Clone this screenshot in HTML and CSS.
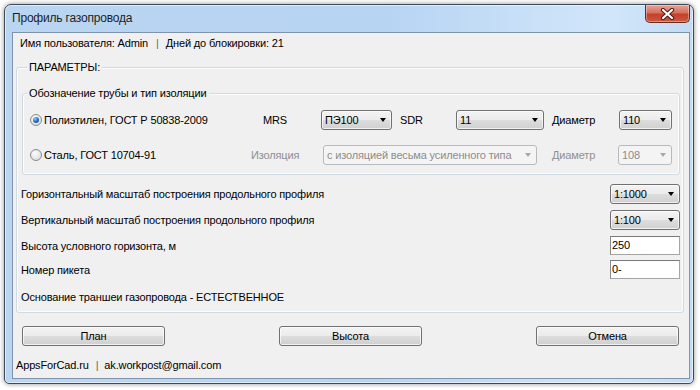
FILE: index.html
```html
<!DOCTYPE html>
<html>
<head>
	<meta charset="UTF-8" />
	<title>Профиль газопровода</title>
	<link rel="stylesheet" href="styles.css">
</head>
<body>
	<div class="window">
		<!--title bar-->
		<div class="titlebar">
			<span class="title">Профиль газопровода</span>
			<div class="close">
				<svg width="15" height="12" viewBox="0 0 15 12">
					<path d="M3 2 L12 10 M12 2 L3 10" stroke="#4a1a12" stroke-width="4.2" stroke-linecap="round"/>
					<path d="M3 2 L12 10 M12 2 L3 10" stroke="#fff" stroke-width="2.2" stroke-linecap="round"/>
				</svg>
			</div>
		</div>

		<div class="client">
			<div class="userline">Имя пользователя: Admin<span class="sep">|</span>Дней до блокировки: 21</div>

			<div class="group params">
				<div class="group-title">ПАРАМЕТРЫ:</div>

				<div class="group pipe">
					<div class="group-title">Обозначение трубы и тип изоляции</div>
					<div class="pipe-row">
						<label class="opt w-poly"><span class="radio checked"></span>Полиэтилен, ГОСТ Р 50838-2009</label>
						<span class="lbl w-mrs">MRS</span>
						<div class="combo w-71"><span>ПЭ100</span><i class="arrow"></i></div>
						<span class="lbl w-sdr">SDR</span>
						<div class="combo w-88"><span>11</span><i class="arrow"></i></div>
						<span class="lbl w-diam">Диаметр</span>
						<div class="combo w-53"><span>110</span><i class="arrow"></i></div>
					</div>
					<div class="pipe-row second">
						<label class="opt w-steel"><span class="radio"></span>Сталь, ГОСТ 10704-91</label>
						<span class="lbl off w-iso">Изоляция</span>
						<div class="combo off w-214"><span>с изоляцией весьма усиленного типа</span><i class="arrow"></i></div>
						<span class="lbl off w-diam2">Диаметр</span>
						<div class="combo off w-54"><span>108</span><i class="arrow"></i></div>
					</div>
				</div>

				<div class="field">
					<span>Горизонтальный масштаб построения продольного профиля</span>
					<div class="combo w-70"><span>1:1000</span><i class="arrow"></i></div>
				</div>
				<div class="field">
					<span>Вертикальный масштаб построения продольного профиля</span>
					<div class="combo w-70"><span>1:100</span><i class="arrow"></i></div>
				</div>
				<div class="field short">
					<span>Высота условного горизонта, м</span>
					<div class="textbox">250</div>
				</div>
				<div class="field short tight">
					<span>Номер пикета</span>
					<div class="textbox">0-</div>
				</div>
				<div class="note">Основание траншеи газопровода - ЕСТЕСТВЕННОЕ</div>
			</div>

			<!--buttons-->
			<div class="buttons">
				<div class="btn">План</div>
				<div class="btn">Высота</div>
				<div class="btn">Отмена</div>
			</div>

			<div class="footer">AppsForCad.ru<span class="sep">|</span>ak.workpost@gmail.com</div>
		</div>
	</div>
</body>
</html>
```

FILE: styles.css
```css
body {
	margin: 0;
	background: #fff;
	font-family: "Liberation Sans", Arial, sans-serif;
	font-size: 11px;
	letter-spacing: -0.15px;
	color: #000;
}
.window {
	margin: 4px;
	width: 678px;
	height: 374px;
	border: 1px solid #3d4a58;
	border-radius: 7px 7px 5px 5px;
	background: linear-gradient(to right, #bad5f1 0%, #b7d4f3 55%, #d2e6fa 88%, #c2dbf3 100%);
	box-shadow: inset 0 0 0 1px rgba(255,255,255,0.55), 0 0 5px rgba(0,0,0,0.45);
	padding: 0 3px 4px 7px;
	display: flex;
	flex-direction: column;
}
.titlebar {
	height: 27px;
	display: flex;
	align-items: flex-start;
	justify-content: space-between;
	flex: none;
}
.title {
	font-size: 12px;
	letter-spacing: -0.2px;
	line-height: 27px;
	color: #1e1e1e;
}
.close {
	width: 45px;
	height: 18px;
	box-sizing: border-box;
	border: 1px solid #6b2a20;
	border-top: none;
	border-radius: 0 0 5px 5px;
	background: linear-gradient(#e8a295 0%, #d7705f 45%, #c4402b 55%, #c85a40 100%);
	box-shadow: inset 0 0 0 1px rgba(255,255,255,0.35);
	display: flex;
	align-items: center;
	justify-content: center;
}
.client {
	flex: 1;
	background: #f0f0f0;
	border: 1px solid #7f93aa;
	display: flex;
	flex-direction: column;
}
.userline {
	line-height: 13px;
	padding: 4px 0 0 7px;
}
.sep {
	color: #6a6a6a;
	margin: 0 7px 0 8px;
}

/*group boxes*/
.group {
	border: 1px solid #d0dae2;
	border-radius: 3px;
	box-shadow: inset 0 0 0 1px #fcfcfc;
}
.group-title {
	display: table;
	background: #f0f0f0;
	line-height: 13px;
	margin: -7px 0 0 6px;
	padding: 0 2px;
}
.params {
	margin: 17px 0 0 3px;
	padding: 0 3px 8px 4px;
	box-sizing: border-box;
	width: 668px;
}
.pipe {
	margin: 19px 0 0 1px;
	width: 658px;
	box-sizing: border-box;
	padding-bottom: 9px;
}
.pipe .group-title {
	margin-left: 4px;
}
.pipe-row {
	display: flex;
	align-items: center;
	height: 20px;
	margin-top: 10px;
}
.pipe-row.second {
	margin-top: 15px;
}
.opt {
	display: flex;
	align-items: center;
	padding-left: 7px;
	box-sizing: border-box;
}
.w-poly { width: 240px; }
.w-steel { width: 228px; }
.w-mrs { width: 58px; }
.w-sdr { width: 64px; padding-left: 8px; }
.w-diam { width: 75px; padding-left: 8px; }
.w-iso { width: 72px; }
.w-diam2 { width: 81px; padding-left: 15px; }
.lbl {
	box-sizing: border-box;
}
.lbl.off {
	color: #8f8f8f;
}
.radio {
	width: 12px;
	height: 12px;
	box-sizing: border-box;
	border-radius: 50%;
	border: 1px solid #8b8d90;
	background: radial-gradient(circle at 40% 35%, #fdfdfd 0%, #e4e4e4 60%, #cfd0d1 100%);
	margin-right: 2px;
	display: flex;
	align-items: center;
	justify-content: center;
}
.radio.checked::after {
	content: "";
	width: 6px;
	height: 6px;
	border-radius: 50%;
	background: radial-gradient(circle at 35% 30%, #9fd0f5 0%, #2a78c8 45%, #0d3d80 100%);
}

/*combo boxes*/
.combo {
	height: 20px;
	box-sizing: border-box;
	border: 1px solid #707070;
	border-radius: 3px;
	background: linear-gradient(#f3f3f3 0%, #ebebeb 50%, #dddddd 50%, #d0d0d0 100%);
	box-shadow: inset 0 0 0 1px rgba(255,255,255,0.7);
	display: flex;
	align-items: center;
	justify-content: space-between;
	padding: 0 5px 0 3px;
	flex: none;
}
.combo span {
	line-height: 18px;
	white-space: nowrap;
}
.arrow {
	width: 0;
	height: 0;
	border-left: 3.5px solid transparent;
	border-right: 3.5px solid transparent;
	border-top: 4px solid #000;
}
.combo.off {
	border-color: #b7bbbf;
	background: #f4f4f4;
	box-shadow: none;
	color: #8d8d8d;
}
.combo.off .arrow {
	border-top-color: #a8a8a8;
}
.w-71 { width: 71px; }
.w-88 { width: 88px; }
.w-53 { width: 53px; }
.w-214 { width: 214px; }
.w-54 { width: 54px; }
.w-70 { width: 70px; }

/*fields*/
.field {
	display: flex;
	align-items: center;
	justify-content: space-between;
	height: 20px;
	margin-top: 6px;
}
.pipe + .field {
	margin-top: 9px;
}
.field.short {
	height: 19px;
}
.field.tight {
	margin-top: 5px;
}
.textbox {
	width: 70px;
	height: 19px;
	box-sizing: border-box;
	background: #fff;
	border: 1px solid #8c8c8c;
	border-color: #7a7a7a #a5a5a5 #a5a5a5 #8c8c8c;
	line-height: 17px;
	padding-left: 1px;
}
.note {
	line-height: 13px;
	margin-top: 12px;
}

/*buttons*/
.buttons {
	display: flex;
	justify-content: space-between;
	padding: 0 10px 0 9px;
	margin-top: 13px;
}
.btn {
	width: 143px;
	height: 20px;
	box-sizing: border-box;
	border: 1px solid #707070;
	border-radius: 3px;
	background: linear-gradient(#f3f3f3 0%, #ebebeb 50%, #dddddd 50%, #cfcfcf 100%);
	box-shadow: inset 0 0 0 1px rgba(255,255,255,0.7);
	text-align: center;
	line-height: 18px;
}
.footer {
	line-height: 13px;
	margin-top: 13px;
	padding-left: 3px;
}
.footer .sep {
	margin: 0 6px 0 7px;
}
```
